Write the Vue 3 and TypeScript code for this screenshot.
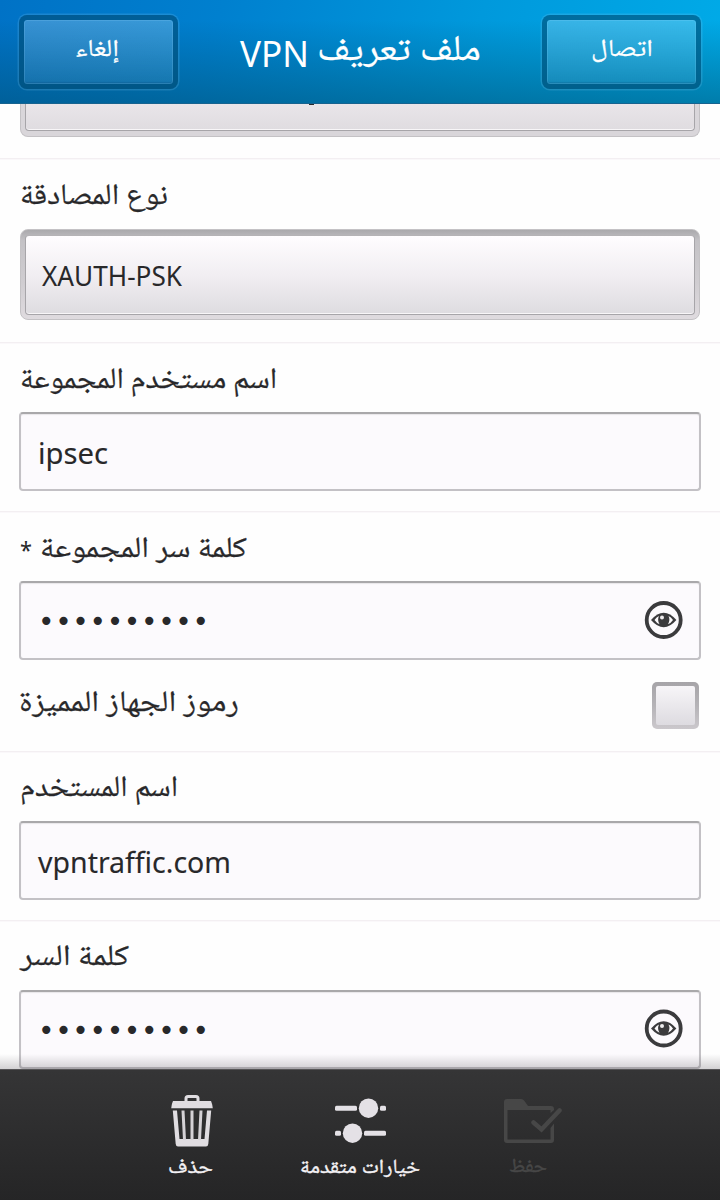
<script setup lang="ts">
import { h } from 'vue'

interface FitProps {
  text: string
  w: number
  h: number
  y: number
  size: number
}

// Single line of text fitted to a fixed advance width
const FitText = (p: FitProps) =>
  h('svg', { width: p.w, height: p.h, class: 'fit' }, [
    h(
      'text',
      {
        x: p.w / 2,
        y: p.y,
        'font-size': p.size,
        'text-anchor': 'middle',
        textLength: p.w,
        lengthAdjust: 'spacingAndGlyphs',
      },
      p.text,
    ),
  ])
FitText.props = ['text', 'w', 'h', 'y', 'size']

const dots = '•'.repeat(10)
</script>

<template>
  <div class="screen">
    <header class="bar">
      <button class="btn left"><FitText text="إلغاء" :w="44" :h="64" :y="35.5" :size="24" /></button>
      <h1 class="title">
        <FitText class="latin" text="VPN" :w="69" :h="104" :y="66.5" :size="36" />
        <FitText text="ملف تعريف" :w="164" :h="104" :y="60" :size="36" />
      </h1>
      <button class="btn"><FitText text="اتصال" :w="62" :h="64" :y="35.5" :size="24" /></button>
    </header>

    <main class="form">
      <section class="row first">
        <div class="select cut"><div class="face"></div></div>
        <i class="tail"></i>
      </section>

      <section class="row">
        <div class="label tall"><FitText text="نوع المصادقة" :w="148" :h="69" :y="44.5" :size="29.5" /></div>
        <div class="select">
          <div class="face"><FitText class="latin" text="XAUTH-PSK" :w="140" :h="76" :y="50" :size="26.5" /></div>
        </div>
      </section>

      <section class="row">
        <div class="label"><FitText text="اسم مستخدم المجموعة" :w="257" :h="69" :y="44.5" :size="29.5" /></div>
        <div class="input"><FitText class="latin mid" text="ipsec" :w="70" :h="75" :y="49.5" :size="28.5" /></div>
      </section>

      <section class="row">
        <div class="label">
          <FitText class="latin" text="*" :w="12" :h="69" :y="47" :size="24" />
          <FitText text="كلمة سر المجموعة" :w="207" :h="69" :y="44.5" :size="29.5" />
        </div>
        <div class="input">
          <span class="dots">{{ dots }}</span>
          <svg class="eye" width="40" height="40" viewBox="0 0 40 40">
            <circle cx="19.700" cy="20" r="17" fill="none" stroke="#3b3b3d" stroke-width="3.8" />
            <path d="M7 20Q19.700 5.500 32.400 20Q19.700 34.500 7 20Z" fill="#3b3b3d" />
            <path d="M10.500 20Q12.500 17 15 16Q13 20 15.500 24.200Q12.500 23 10.500 20ZM29 20Q27 17 24.500 16Q26.500 20 24 24.200Q27 23 29 20Z" fill="#fcfafc" />
            <circle cx="18" cy="17.500" r="2" fill="#eeecee" />
          </svg>
        </div>
        <div class="check-row">
          <FitText text="رموز الجهاز المميزة" :w="220" :h="46" :y="28.5" :size="29.5" />
          <span class="check"><i></i></span>
        </div>
      </section>

      <section class="row">
        <div class="label"><FitText text="اسم المستخدم" :w="158" :h="69" :y="43.5" :size="29.5" /></div>
        <div class="input"><FitText class="latin mid" text="vpntraffic.com" :w="193" :h="75" :y="49.5" :size="28.5" /></div>
      </section>

      <section class="row">
        <div class="label"><FitText text="كلمة السر" :w="109" :h="69" :y="43.5" :size="29.5" /></div>
        <div class="input">
          <span class="dots">{{ dots }}</span>
          <svg class="eye" width="40" height="40" viewBox="0 0 40 40">
            <circle cx="19.700" cy="19.500" r="17" fill="none" stroke="#3b3b3d" stroke-width="3.8" />
            <path d="M7 19.500Q19.700 5 32.400 19.500Q19.700 34 7 19.500Z" fill="#3b3b3d" />
            <path d="M10.500 19.500Q12.500 16.500 15 15.500Q13 19.500 15.500 23.700Q12.500 22.500 10.500 19.500ZM29 19.500Q27 16.500 24.500 15.500Q26.500 19.500 24 23.700Q27 22.500 29 19.500Z" fill="#fcfafc" />
            <circle cx="18" cy="17" r="2" fill="#eeecee" />
          </svg>
        </div>
      </section>
      <div class="shade"></div>
    </main>

    <footer class="actions">
      <div class="action del">
        <svg width="44" height="54" viewBox="0 0 44 54">
          <path d="M16 8V4.500Q16 2.500 18 2.500H26Q28 2.500 28 4.500V8" fill="none" stroke="#e0dde1" stroke-width="3" />
          <path d="M3 7H41Q42.500 10 42.800 14.300H1.200Q1.500 10 3 7Z" fill="#e0dde1" />
          <path d="M2.800 16.500H7L9.500 45H34.500L37 16.500H41.200L38.300 50Q38 52.500 36 52.500H8Q6 52.500 5.700 50Z" fill="#e0dde1" />
          <path d="M13 16.500L14.500 46M22 16.500V46M31 16.500L29.500 46" stroke="#d5d2d6" stroke-width="3" />
        </svg>
        <FitText text="حذف" :w="45" :h="40" :y="25" :size="20" />
      </div>
      <div class="action">
        <svg width="52" height="54" viewBox="0 0 52 54">
          <g fill="#e4e1e6">
            <rect x="1" y="11.700" width="22" height="5" rx="1.500" />
            <rect x="46" y="11.700" width="6" height="5" rx="1.500" />
            <circle cx="34.500" cy="14.200" r="9.700" />
            <rect x="1" y="36.700" width="6" height="5" rx="1.500" />
            <rect x="30" y="36.700" width="22" height="5" rx="1.500" />
            <circle cx="18.500" cy="39.200" r="9.700" />
          </g>
        </svg>
        <FitText text="خيارات متقدمة" :w="120" :h="40" :y="25" :size="20" />
      </div>
      <div class="action off">
        <svg width="60" height="54" viewBox="0 0 60 54">
          <path d="M2 46V8Q2 5 5 5H19Q21 5 22.500 7L26 12H49Q52 12 52 15V16L48.500 19V16H5.500V45.500H48.500V34L52 29.500V46Q52 49 49 49H5Q2 49 2 46Z" fill="#474747" />
          <path d="M31.500 28.500L39.500 35.500L57.500 16.500" fill="none" stroke="#474747" stroke-width="4.500" stroke-linecap="round" />
        </svg>
        <FitText text="حفظ" :w="38" :h="40" :y="24" :size="20" />
      </div>
    </footer>
  </div>
</template>

<style>
body { background: #fefefe; }
.fit { display: block; overflow: visible; flex: none; direction: rtl; fill: currentColor; stroke: currentColor; stroke-width: 0.25px; font-family: "Noto Naskh Arabic", Amiri, "DejaVu Sans", sans-serif; }
.fit.latin { direction: ltr; stroke-width: 0; font-family: "Noto Sans", sans-serif; }
.fit.mid { stroke-width: 0.1px; }
</style>

<style scoped>
.screen { width: 720px; height: 1200px; display: flex; flex-direction: column; overflow: hidden; color: #28282a; }
.bar {
  height: 104px; flex: none; display: flex; align-items: center; justify-content: space-between; padding: 0 19px; box-sizing: border-box; color: #fff;
  background: linear-gradient(180deg, rgba(0, 75, 105, 0) 20%, rgba(0, 75, 105, .48) 100%), linear-gradient(105deg, #0072c6 0%, #0080cf 30%, #0099dc 65%, #00abe8 100%);
  border-bottom: 1px solid #17638f;
}
.btn {
  width: 159px; height: 74px; margin: 1px 0 0; padding: 0; box-sizing: border-box; border: 5px solid rgba(0, 75, 115, .6); border-radius: 8px; color: #fff;
  display: flex; justify-content: center; align-items: center;
  background: linear-gradient(180deg, rgba(255, 255, 255, .22), rgba(255, 255, 255, .08)) padding-box;
  box-shadow: 0 0 0 1.500px rgba(130, 205, 245, .2), inset 0 0 0 1px rgba(150, 215, 250, .2), inset 0 -2px 1px rgba(0, 60, 110, .2);
}
.btn.left .fit { margin-right: 3px; }
.title { margin: 0; display: flex; gap: 8px; height: 104px; font-weight: 400; }
.form { height: 965px; flex: none; overflow: hidden; background: #fefefe; position: relative; }
.row { border-bottom: 1px solid #f3eff2; padding: 0 19px 20px; box-shadow: 0 1px 0 #faf8fa; }
.row.first { position: relative; padding-bottom: 21px; }
.tail { position: absolute; left: 309px; top: 0; width: 5px; height: 1px; background: #29292b; }
.label { height: 69px; padding-left: 1px; display: flex; gap: 8px; }
.label.tall { height: 70px; }
.select {
  height: 91px; box-sizing: border-box; padding: 5px 4px 4px; border-radius: 8px; margin: 0 1px 2px; border: 1px solid #c4c2c5;
  background: linear-gradient(180deg, #aaa9ac, #c4c2c6 12%, #d0cdd1 60%, #dfdbdf);
}
.select.cut { height: 33px; padding-top: 0; border-top: 0; border-radius: 0 0 8px 8px; background: #d9d6da; margin-bottom: 0; }
.face { height: 100%; box-sizing: border-box; border: 1px solid #a7a5a9; border-top-color: #b5b3b6; border-radius: 4px; background: linear-gradient(180deg, #fffdff, #f1eef2 50%, #dedce0); padding-left: 16px; box-shadow: inset 0 -1px 0 #f8f6f8; }
.cut .face { height: 27px; border-top: 0; border-radius: 0 0 4px 4px; background: linear-gradient(180deg, #e9e5e9, #dfdce0); }
.input {
  height: 79px; box-sizing: border-box; border: 2px solid #c3c1c5; border-top-color: #a9a8aa; border-radius: 4px; background: #fcfafd;
  display: flex; justify-content: space-between; align-items: center; padding: 0 15px 0 17px; box-shadow: inset 0 1px 1px #e8e6e9;
}
.eye { margin-bottom: 2px; }
.dots { font: 28px/28px "DejaVu Sans", sans-serif; letter-spacing: 0.650px; padding: 3px 0 0 0; }
.check-row { display: flex; justify-content: space-between; padding: 22px 2px 2px 0; }
.check { width: 47px; height: 47px; box-sizing: border-box; border-radius: 5px; padding: 4px; background: linear-gradient(180deg, #a6a4a8, #b5b3b7 50%, #cbc8cc); }
.check i { display: block; height: 100%; box-sizing: border-box; border-radius: 2px; background: linear-gradient(180deg, #f7f5f8, #dddbe0); }
.shade { position: absolute; left: 0; right: 0; bottom: 0; height: 15px; background: linear-gradient(180deg, rgba(80, 75, 82, 0), rgba(80, 75, 82, .25)); }
.actions { flex: 1; display: flex; justify-content: center; background: linear-gradient(180deg, #353536, #252526); border-top: 1px solid #555456; box-sizing: border-box; color: #f4f2f5; }
.action { width: 168px; display: flex; flex-direction: column; align-items: center; padding-top: 24px; }
.action .fit { stroke-width: 0.4px; }
.action.del .fit { margin-right: 4px; }
.action.off { color: #474747; }
.action.off > svg:first-child { margin-left: 8px; }
</style>
